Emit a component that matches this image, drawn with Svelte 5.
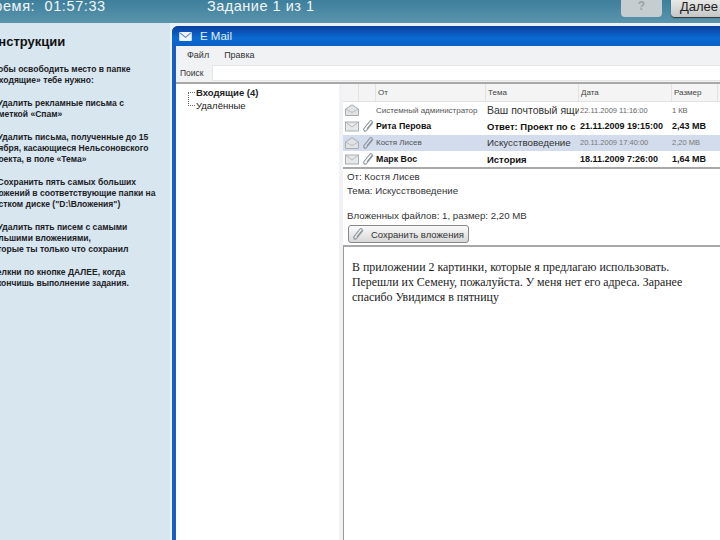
<script>
  const rows = [
    { from: 'Системный администратор', subj: 'Ваш почтовый ящик', date: '22.11.2009 11:16:00', size: '1 КB', clip: false, open: true, cls: 'thin' },
    { from: 'Рита Перова', subj: 'Ответ: Проект по с', date: '21.11.2009 19:15:00', size: '2,43 MB', clip: true, open: false, cls: 'bold' },
    { from: 'Костя Лисев', subj: 'Искусствоведение', date: '20.11.2009 17:40:00', size: '2,20 MB', clip: true, open: true, cls: 'sel' },
    { from: 'Марк Вос', subj: 'История', date: '18.11.2009 7:26:00', size: '1,64 MB', clip: true, open: false, cls: 'bold' }
  ];
</script>

{#snippet clipIcon()}
  <svg class="clip" viewBox="0 0 14 14" width="14" height="14"><path d="M12 3.500 5.500 11.500c-1.300 1.500-3.700-.3-2.500-2L9 2c1-1.200 3 .2 2 1.600L6 9.800" fill="none" stroke="#8a949c" stroke-width="1.100"/></svg>
{/snippet}

{#snippet envIcon(open)}
  <svg class="env" viewBox="0 0 14 12" width="14" height="12">
    {#if open}
      <path d="M.5 5 7 .8 13.500 5v6.500H.5z" fill="#e0e2e4" stroke="#a8acb0"/><path d="M.5 5 7 8.500 13.500 5" fill="none" stroke="#b8bcc0"/>
    {:else}
      <rect x=".5" y="2" width="13" height="9" fill="#e6e8ea" stroke="#a8acb0"/><path d="M.5 2 7 7l6.500-5" fill="none" stroke="#b4b8bc"/>
    {/if}
  </svg>
{/snippet}

<div class="page">
  <header class="top">
    <div class="timer">Время:&nbsp; 01:57:33</div>
    <div class="task">Задание 1 из 1</div>
    <div class="top-btns">
      <span class="help">?</span>
      <span class="next">Далее</span>
    </div>
  </header>

  <div class="main">
    <aside class="side">
      <h2>Инструкции</h2>
      <p>Чтобы освободить место в папке<br>«Входящие» тебе нужно:</p>
      <p>1. Удалить рекламные письма с<br>пометкой «Спам»</p>
      <p>2. Удалить письма, полученные до 15<br>ноября, касающиеся Нельсоновского<br>проекта, в поле «Тема»</p>
      <p>3. Сохранить пять самых больших<br>вложений в соответствующие папки на<br>жестком диске ("D:\Вложения")</p>
      <p>4. Удалить пять писем с самыми<br>большими вложениями,<br>которые ты только что сохранил</p>
      <p>Щелкни по кнопке ДАЛЕЕ, когда<br>закончишь выполнение задания.</p>
    </aside>

    <section class="win">
      <div class="title">
        <svg viewBox="0 0 14 10" width="13" height="9"><rect width="14" height="10" rx="1" fill="#eef4fa"/><path d="M1 1l6 5 6-5" fill="none" stroke="#5c86c0" stroke-width="1.200"/></svg>
        <span>E Mail</span>
      </div>
      <div class="menu"><span>Файл</span><span>Правка</span></div>
      <div class="search"><label for="q">Поиск</label><input id="q" /></div>
      <div class="panes">
        <div class="tree">
          <div class="tree-row b"><i class="dash"></i>Входящие (4)</div>
          <div class="tree-row"><i class="dash"></i>Удалённые</div>
        </div>
        <div class="right">
          <div class="list">
            <div class="row head">
              <span class="c-ic"></span><span class="c-ic2"></span>
              <span class="c-from">От</span><span class="c-subj">Тема</span><span class="c-date">Дата</span><span class="c-size">Размер</span>
            </div>
            {#each rows as r}
              <div class="row {r.cls}">
                <span class="c-ic">{@render envIcon(r.open)}</span>
                <span class="c-ic2">{#if r.clip}{@render clipIcon()}{/if}</span>
                <span class="c-from">{r.from}</span><span class="c-subj">{r.subj}</span><span class="c-date">{r.date}</span><span class="c-size">{r.size}</span>
              </div>
            {/each}
          </div>
          <div class="info">
            <div>От: Костя Лисев</div>
            <div>Тема: Искусствоведение</div>
            <div class="files">Вложенных файлов: 1, размер: 2,20 MB</div>
            <button class="save">{@render clipIcon()}<span>Сохранить вложения</span></button>
          </div>
          <div class="body">
            В приложении 2 картинки, которые я предлагаю использовать.<br>
            Перешли их Семену, пожалуйста. У меня нет его адреса. Заранее<br>
            спасибо Увидимся в пятницу
          </div>
        </div>
      </div>
    </section>
  </div>
</div>

<style>
  :global(body) { margin: 0; background: #fff; }
  .page { width: 720px; height: 540px; overflow: hidden; font-family: "Liberation Sans", sans-serif; display: flex; flex-direction: column; }
  .top { height: 23px; flex: none; background: linear-gradient(#3d7f9c, #5b94ac); color: #f2f6f8; position: relative; font-size: 14.500px; display: flex; align-items: flex-start; line-height: 12px; }
  .timer { margin-left: -16px; width: 223px; letter-spacing: .6px; }
  .task { letter-spacing: .5px; }
  .top-btns { position: absolute; right: -11px; top: -6px; display: flex; gap: 9px; }
  .help, .next { height: 23px; border-radius: 4px; display: block; text-align: center; line-height: 25px; box-sizing: border-box; }
  .help { width: 41px; background: #c6cdd0; color: #9aa2a6; font-weight: bold; font-size: 12px; }
  .next { width: 60px; background: linear-gradient(#f4f4f2, #c4c6c6); color: #222; font-size: 13px; box-shadow: 0 1px 1px #333; text-align: left; padding-left: 9px; }
  .main { flex: 1; display: flex; min-height: 0; background: #e8f2f7; }
  .side { width: 170px; flex: none; background: #d8e6ef; color: #1c2226; font-size: 8.550px; line-height: 11.200px; font-weight: bold; box-sizing: border-box; padding-top: 11px; overflow: hidden; }
  .side h2 { margin: 0 0 15px -11px; font-size: 13px; line-height: 15px; color: #111; }
  .side p { margin: 0 0 11.500px -12px; white-space: nowrap; }
  .win { flex: 1; margin: 3px 0 0 2px; background: #1a5fc0; border-radius: 6px 0 0 0; display: flex; flex-direction: column; min-width: 0; padding-left: 4px; }
  .title { height: 20px; flex: none; margin-left: -4px; background: linear-gradient(#0a3f9c, #0a6ad0 60%, #0a62c8); color: #e2eef8; font-size: 11.500px; display: flex; align-items: center; gap: 8px; padding-left: 7px; border-radius: 6px 0 0 0; }
  .menu { height: 18px; flex: none; background: #f0f2f4; font-size: 9px; color: #333; display: flex; gap: 15px; padding-left: 11px; align-items: center; }
  .search { height: 20px; flex: none; background: #f0f2f4; font-size: 8.500px; color: #333; display: flex; align-items: center; gap: 3px; padding-left: 4px; border-bottom: 2px solid #a8a8a8; box-sizing: border-box; }
  .search label { width: 29px; }
  .search input { flex: 1; height: 16px; margin: 0; padding: 0; border: 1px solid #e4e6e8; border-right: 0; background: #fff; box-sizing: border-box; }
  .panes { flex: 1; display: flex; min-height: 0; background: #f0f2f4; gap: 4px; }
  .tree { width: 163px; flex: none; background: #fff; padding: 2px 0 0 12px; box-sizing: border-box; font-size: 9.500px; color: #222; }
  .tree-row { height: 13px; line-height: 12px; display: flex; align-items: center; position: relative; }
  .tree-row.b { font-weight: bold; }
  .dash { width: 7px; border-top: 1px dotted #666; margin-right: 1px; }
  .tree-row:last-child::before { content: ""; position: absolute; left: 0; top: -6px; height: 13px; border-left: 1px dotted #666; }
  .right { flex: 1; display: flex; flex-direction: column; min-width: 0; background: #fff; }
  .list { flex: none; border-bottom: 2px solid #a8a8a8; }
  .row { display: flex; height: 16.300px; align-items: center; font-size: 9px; color: #333; white-space: nowrap; }
  .head { height: 18px; font-size: 8px; color: #444; background: #f4f4f4; border-bottom: 1px solid #e2e2e2; box-sizing: border-box; }
  .head span { height: 100%; display: flex; align-items: center; border-right: 1px solid #e2e2e2; box-sizing: border-box; }
  .row > span { overflow: hidden; flex: none; }
  .c-ic { width: 16px; display: flex; padding-left: 2px; box-sizing: border-box; }
  .c-ic2 { width: 17px; display: flex; justify-content: center; }
  .c-from { width: 110px; box-sizing: border-box; padding-left: 0; }
  .head .c-from { padding-left: 2px; }
  .c-subj { width: 93px; padding-left: 1px; box-sizing: border-box; }
  .c-date { width: 93px; box-sizing: border-box; padding-left: 1px; }
  .c-size { width: 46px; padding-left: 0; box-sizing: border-box; }
  .head .c-subj, .head .c-date, .head .c-size { padding-left: 2px; }
  .thin { font-size: 8px; color: #555; }
  .thin .c-subj { font-size: 10.500px; color: #333; }
  .thin .c-date, .thin .c-size { font-size: 7.500px; color: #666; }
  .bold { font-weight: bold; color: #111; }
  .bold .c-from { font-size: 8.800px; }
  .bold .c-subj { font-size: 9.500px; }
  .sel { background: #d2dcec; font-size: 8px; color: #555; }
  .sel .c-subj { font-size: 9.800px; color: #333; }
  .sel .c-date, .sel .c-size { font-size: 7.500px; color: #777; }
  .clip { display: block; }
  .info { flex: none; padding: 1px 0 0 4px; font-size: 9.700px; line-height: 14px; color: #333; height: 78px; box-sizing: border-box; border-bottom: 2px solid #a8a8a8; }
  .files { margin-top: 11px; }
  .save { margin: 2px 0 0 1px; width: 121px; height: 18px; padding: 0 0 0 2px; display: flex; align-items: center; gap: 6px; border: 1px solid #888; border-radius: 3px; background: linear-gradient(#fafafa, #d8d8d8); font: 9.500px "Liberation Sans", sans-serif; color: #333; }
  .body { flex: 1; padding: 13px 0 0 8px; font-family: "Liberation Serif", serif; font-size: 11.900px; line-height: 14.700px; color: #222; border-left: 1px solid #999; white-space: nowrap; }
</style>
